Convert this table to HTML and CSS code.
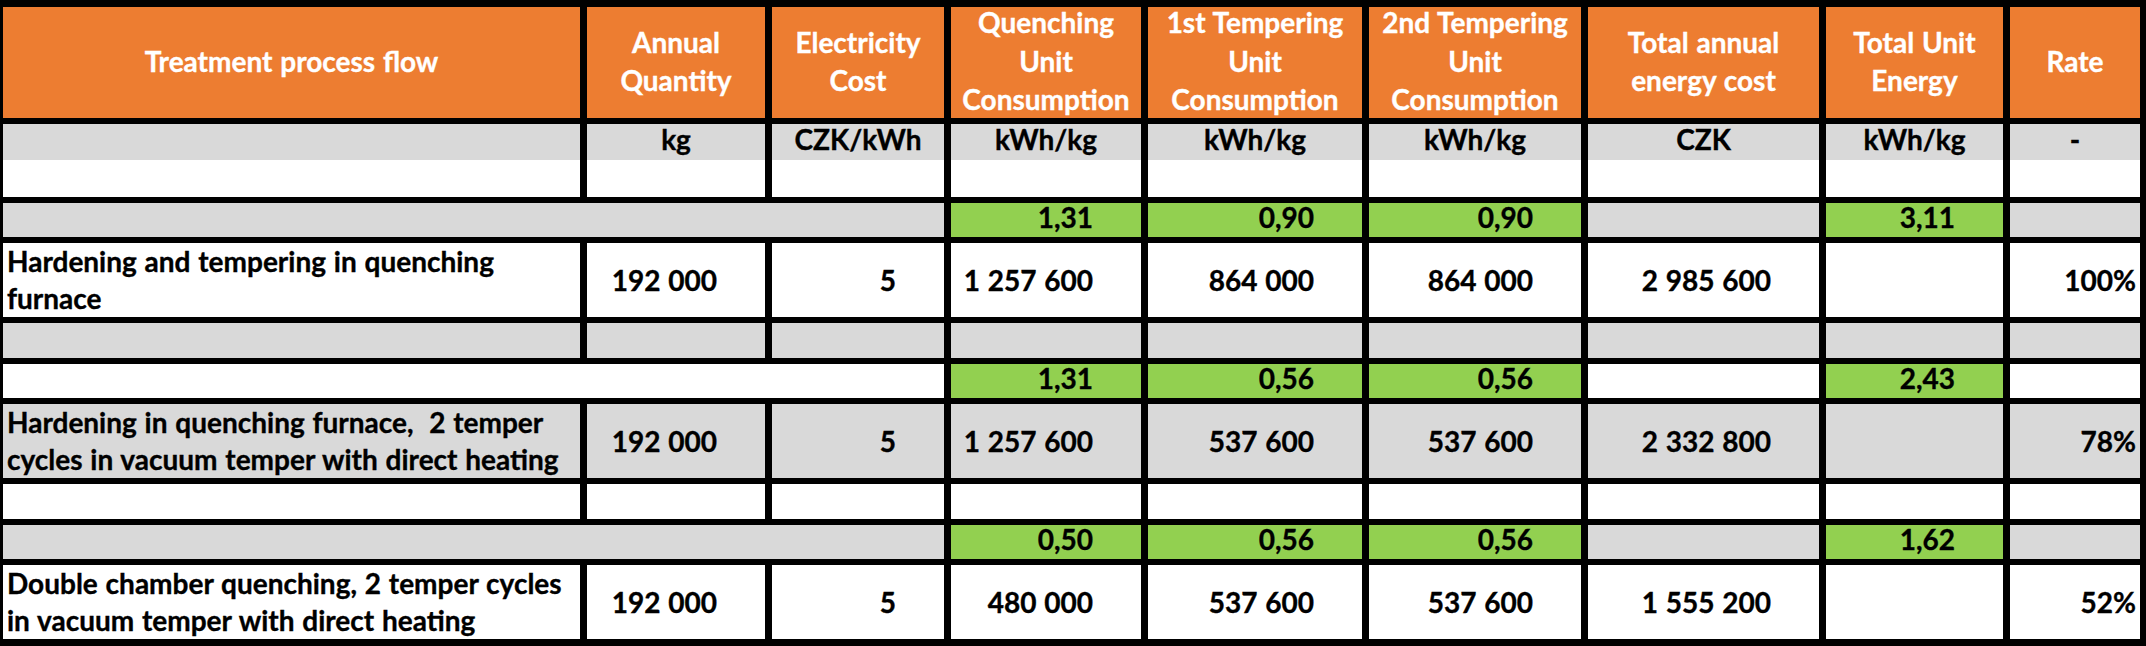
FILE: index.html
```html
<!DOCTYPE html>
<html lang="en">
<head>
<meta charset="utf-8">
<title>Treatment process energy cost</title>
<link rel="stylesheet" href="styles.css">
</head>
<body>
<div class="sheet">
  <div class="row head">
    <div class="cell h">Treatment process flow</div>
    <div class="cell h">Annual<br>Quantity</div>
    <div class="cell h">Electricity<br>Cost</div>
    <div class="cell h">Quenching<br>Unit<br>Consumption</div>
    <div class="cell h">1st Tempering<br>Unit<br>Consumption</div>
    <div class="cell h">2nd Tempering<br>Unit<br>Consumption</div>
    <div class="cell h">Total annual<br>energy cost</div>
    <div class="cell h">Total Unit<br>Energy</div>
    <div class="cell h">Rate</div>
  </div>

  <div class="row units">
    <div class="cell u"><span class="ut"></span></div>
    <div class="cell u"><span class="ut">kg</span></div>
    <div class="cell u"><span class="ut">CZK/kWh</span></div>
    <div class="cell u"><span class="ut">kWh/kg</span></div>
    <div class="cell u"><span class="ut">kWh/kg</span></div>
    <div class="cell u"><span class="ut">kWh/kg</span></div>
    <div class="cell u"><span class="ut">CZK</span></div>
    <div class="cell u"><span class="ut">kWh/kg</span></div>
    <div class="cell u"><span class="ut">-</span></div>
  </div>

  <div class="row sub">
    <div class="cell span3 gray"></div>
    <div class="cell num green">1,31</div>
    <div class="cell num green">0,90</div>
    <div class="cell num green">0,90</div>
    <div class="cell gray"></div>
    <div class="cell num green">3,11</div>
    <div class="cell gray"></div>
  </div>

  <div class="row data">
    <div class="cell label white">Hardening and tempering in quenching<br>furnace</div>
    <div class="cell num white">192 000</div>
    <div class="cell num white">5</div>
    <div class="cell num white">1 257 600</div>
    <div class="cell num white">864 000</div>
    <div class="cell num white">864 000</div>
    <div class="cell num white">2 985 600</div>
    <div class="cell white"></div>
    <div class="cell num rate white">100%</div>
  </div>

  <div class="row blank">
    <div class="cell gray"></div>
    <div class="cell gray"></div>
    <div class="cell gray"></div>
    <div class="cell gray"></div>
    <div class="cell gray"></div>
    <div class="cell gray"></div>
    <div class="cell gray"></div>
    <div class="cell gray"></div>
    <div class="cell gray"></div>
  </div>

  <div class="row sub">
    <div class="cell span3 white"></div>
    <div class="cell num green">1,31</div>
    <div class="cell num green">0,56</div>
    <div class="cell num green">0,56</div>
    <div class="cell white"></div>
    <div class="cell num green">2,43</div>
    <div class="cell white"></div>
  </div>

  <div class="row data">
    <div class="cell label gray">Hardening in quenching furnace,&nbsp; 2 temper<br>cycles in vacuum temper with direct heating</div>
    <div class="cell num gray">192 000</div>
    <div class="cell num gray">5</div>
    <div class="cell num gray">1 257 600</div>
    <div class="cell num gray">537 600</div>
    <div class="cell num gray">537 600</div>
    <div class="cell num gray">2 332 800</div>
    <div class="cell gray"></div>
    <div class="cell num rate gray">78%</div>
  </div>

  <div class="row blank">
    <div class="cell white"></div>
    <div class="cell white"></div>
    <div class="cell white"></div>
    <div class="cell white"></div>
    <div class="cell white"></div>
    <div class="cell white"></div>
    <div class="cell white"></div>
    <div class="cell white"></div>
    <div class="cell white"></div>
  </div>

  <div class="row sub">
    <div class="cell span3 gray"></div>
    <div class="cell num green">0,50</div>
    <div class="cell num green">0,56</div>
    <div class="cell num green">0,56</div>
    <div class="cell gray"></div>
    <div class="cell num green">1,62</div>
    <div class="cell gray"></div>
  </div>

  <div class="row data">
    <div class="cell label white">Double chamber quenching, 2 temper cycles<br>in vacuum temper with direct heating</div>
    <div class="cell num white">192 000</div>
    <div class="cell num white">5</div>
    <div class="cell num white">480 000</div>
    <div class="cell num white">537 600</div>
    <div class="cell num white">537 600</div>
    <div class="cell num white">1 555 200</div>
    <div class="cell white"></div>
    <div class="cell num rate white">52%</div>
  </div>
</div>
</body>
</html>
```

FILE: styles.css
```css
html, body {
  margin: 0;
  padding: 0;
  background: #000;
}

.sheet {
  width: 2146px;
  height: 646px;
  box-sizing: border-box;
  padding: 7px 7px 8px 3px;
  background: #000;
  display: flex;
  flex-direction: column;
  gap: 6px;
  font-family: Lato, "Liberation Sans", sans-serif;
  font-weight: 700;
  font-size: 28px;
  word-spacing: 1px;
  color: #000;
  -webkit-text-stroke: 0.35px currentColor;
}

.row {
  display: grid;
  grid-template-columns: 577px 178px 172px 190px 214px 212px 231px 177px 130px;
  grid-template-rows: 100%;
  column-gap: 7px;
  flex: none;
}

.head { height: 111px; }
.units { height: 73px; }
.sub { height: 34px; }
.data { height: 74px; }
.blank { height: 35px; }

.cell {
  display: flex;
  align-items: center;
  min-width: 0;
  min-height: 0;
  white-space: nowrap;
  box-sizing: border-box;
}

.span3 { grid-column: span 3; }

.white { background: #fff; }
.gray { background: #d9d9d9; }
.green { background: #92d050; }

.h {
  background: #ed7d31;
  color: #fff;
  justify-content: center;
  text-align: center;
  line-height: 38.4px;
  padding-bottom: 3px;
}

.u {
  background: #fff;
  flex-direction: column;
  align-items: stretch;
}

.ut {
  height: 36px;
  flex: none;
  box-sizing: border-box;
  padding-bottom: 7px;
  background: #d9d9d9;
  display: flex;
  align-items: center;
  justify-content: center;
}

.num {
  justify-content: flex-end;
  padding-right: 48px;
}

.sub .num {
  padding-bottom: 7px;
}

.num.rate {
  padding-right: 4px;
}

.label {
  padding-left: 4px;
  line-height: 37px;
}
```
